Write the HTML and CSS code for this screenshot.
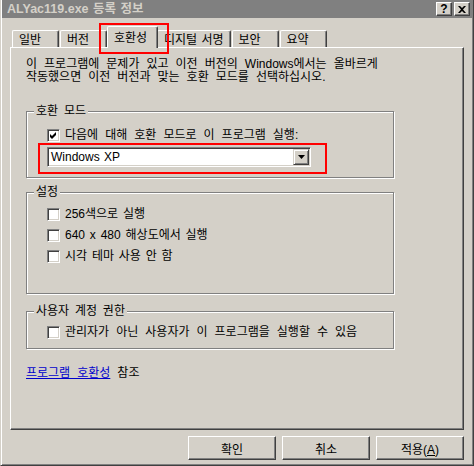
FILE: index.html
```html
<!DOCTYPE html>
<html lang="ko">
  <head>
    <meta charset="UTF-8" />
    <title>ALYac119.exe 등록 정보</title>
    <link rel="stylesheet" href="styles.css">
  </head>

  <body>
    <div class="window">
      <div class="titlebar">
        <span class="title">ALYac119.exe 등록 정보</span>
        <div class="caption-buttons">
          <span class="cap-btn cap-help">?</span>
          <span class="cap-btn">
            <svg width="8" height="7" viewBox="0 0 8 7"><path d="M0 0h2l2 2 2-2h2L5 3.5 8 7H6L4 5 2 7H0l3-3.5z" fill="#000"/></svg>
          </span>
        </div>
      </div>

      <div class="content">
        <div class="tabs">
          <div class="tab">일반</div>
          <div class="tab">버전</div>
          <div class="tab active">호환성</div>
          <div class="tab">디지털 서명</div>
          <div class="tab">보안</div>
          <div class="tab">요약</div>
        </div>

        <div class="panel">
          <p class="intro">이 프로그램에 문제가 있고 이전 버전의 Windows에서는 올바르게<br>작동했으면 이전 버전과 맞는 호환 모드를 선택하십시오.</p>

          <div class="group group-mode">
            <span class="group-title">호환 모드</span>
            <label class="option">
              <span class="check">
                <svg width="9" height="9" viewBox="0 0 9 9"><polygon points="1,3 3,5 7,1 7,4 3,8 1,6" fill="#000"/></svg>
              </span>
              다음에 대해 호환 모드로 이 프로그램 실행:
            </label>
            <div class="combo">
              <span class="combo-value">Windows XP</span>
              <span class="combo-arrow">
                <svg width="7" height="4" viewBox="0 0 7 4"><path d="M0 0h7L3.5 4z" fill="#000"/></svg>
              </span>
            </div>
          </div>

          <div class="group group-settings">
            <span class="group-title">설정</span>
            <label class="option"><span class="check"></span>256색으로 실행</label>
            <label class="option"><span class="check"></span>640 x 480 해상도에서 실행</label>
            <label class="option"><span class="check"></span>시각 테마 사용 안 함</label>
          </div>

          <div class="group group-rights">
            <span class="group-title">사용자 계정 권한</span>
            <label class="option"><span class="check"></span>관리자가 아닌 사용자가 이 프로그램을 실행할 수 있음</label>
          </div>

          <p class="see-also"><a href="#">프로그램 호환성</a> 참조</p>
        </div>

        <div class="buttons">
          <button>확인</button>
          <button>취소</button>
          <button>적용(<u>A</u>)</button>
        </div>
      </div>

      <div class="mark mark-tab"></div>
      <div class="mark mark-combo"></div>
    </div>
  </body>
</html>
```

FILE: styles.css
```css
body {
  margin: 0;
  padding: 0;
  background-color: #d4d0c8;
  font-family: "Liberation Sans", "Noto Sans CJK KR", sans-serif;
  font-size: 12px;
  word-spacing: 3.7px;
  color: #000;
}

.window {
  position: relative;
  width: 474px;
  height: 466px;
  box-sizing: border-box;
  border-left: 1px solid #d4d0c8;
  border-right: 1px solid #404040;
  border-bottom: 1px solid #404040;
  box-shadow: inset 1px 0 #fff, inset -1px -1px #808080;
  padding: 0 1px 1px 1px;
  overflow: hidden;
}

/* title bar */

.titlebar {
  display: flex;
  justify-content: space-between;
  align-items: center;
  height: 18px;
  padding: 0 2px 0 5px;
  background-color: #808080;
}

.title {
  color: #d4d0c8;
  font-weight: bold;
  font-size: 12.5px;
  line-height: 18px;
  word-spacing: 1px;
}

.caption-buttons {
  display: flex;
  gap: 2px;
}

.cap-btn {
  display: flex;
  justify-content: center;
  align-items: center;
  width: 16px;
  height: 14px;
  box-sizing: border-box;
  background-color: #d4d0c8;
  border: 1px solid;
  border-color: #fff #404040 #404040 #fff;
  box-shadow: inset -1px -1px #808080;
}

.cap-help {
  font-weight: bold;
  font-size: 12px;
  line-height: 12px;
}

/* tabs */

.content {
  padding: 0 8px;
}

.tabs {
  display: flex;
  align-items: flex-end;
  height: 21px;
  margin-top: 8px;
  padding-left: 2px;
}

.tab {
  position: relative;
  height: 17px;
  min-width: 47px;
  box-sizing: border-box;
  margin-right: 1px;
  padding: 2px 6px 0;
  line-height: 14px;
  word-spacing: 1px;
  border: 1px solid;
  border-color: #fff #404040 transparent #fff;
  border-bottom: none;
  border-radius: 2px 2px 0 0;
  box-shadow: inset -1px 0 #808080;
  white-space: nowrap;
}

.tab.active {
  z-index: 1;
  min-width: 51px;
  height: 22px;
  margin: 0 -1px -1px -1px;
  padding-top: 4px;
  background-color: #d4d0c8;
}

/* panel */

.panel {
  height: 383px;
  box-sizing: border-box;
  padding: 10px 15px 0;
  border: 1px solid;
  border-color: #fff #404040 #404040 #fff;
  box-shadow: inset -1px -1px #808080;
}

.intro {
  margin: 0;
  line-height: 13px;
}

.group {
  width: 368px;
  box-sizing: border-box;
  padding-left: 20px;
  border: 1px solid #808080;
  box-shadow: inset 1px 1px #fff, 1px 1px #fff;
}

.group-title {
  display: block;
  width: max-content;
  margin: -7px 0 0 -13px;
  padding: 0 2px;
  line-height: 13px;
  word-spacing: 2.5px;
  background-color: #d4d0c8;
}

.group-mode {
  margin-top: 27px;
  padding-bottom: 10px;
}

.group-settings {
  margin-top: 14px;
  padding-bottom: 30px;
}

.group-rights {
  margin-top: 17px;
  padding-bottom: 9px;
}

.option {
  display: flex;
  align-items: center;
  gap: 5px;
  height: 13px;
  line-height: 13px;
  margin-top: 8px;
  white-space: nowrap;
}

.group-mode .option {
  margin-top: 11px;
}

.group-settings .option {
  word-spacing: 1.5px;
}

.group-settings .option:first-of-type {
  margin-top: 9px;
}

.check {
  display: flex;
  justify-content: center;
  align-items: center;
  flex: none;
  width: 13px;
  height: 13px;
  box-sizing: border-box;
  background-color: #fff;
  border: 1px solid;
  border-color: #808080 #fff #fff #808080;
  box-shadow: inset 1px 1px #404040, inset -1px -1px #d4d0c8;
}

.combo {
  display: flex;
  justify-content: space-between;
  align-items: center;
  width: 264px;
  height: 20px;
  box-sizing: border-box;
  margin-top: 5px;
  padding: 1px;
  background-color: #fff;
  border: 1px solid;
  border-color: #808080 #fff #fff #808080;
  box-shadow: inset 1px 1px #404040, inset -1px -1px #d4d0c8;
}

.combo-value {
  padding-left: 2px;
  line-height: 16px;
  word-spacing: 1px;
}

.combo-arrow {
  display: flex;
  justify-content: center;
  align-items: center;
  width: 16px;
  height: 16px;
  box-sizing: border-box;
  background-color: #d4d0c8;
  border: 1px solid;
  border-color: #d4d0c8 #404040 #404040 #d4d0c8;
  box-shadow: inset 1px 1px #fff, inset -1px -1px #808080;
}

.see-also {
  margin: 18px 0 0;
  line-height: 13px;
}

.see-also a {
  color: #0000cc;
}

/* dialog buttons */

.buttons {
  display: flex;
  justify-content: flex-end;
  gap: 6px;
  margin-top: 6px;
}

button {
  width: 88px;
  height: 24px;
  padding: 0;
  font-family: inherit;
  font-size: 12px;
  color: #000;
  background-color: #d4d0c8;
  border: 1px solid;
  border-color: #fff #404040 #404040 #fff;
  box-shadow: inset -1px -1px #808080;
}

/* red annotation boxes */

.mark {
  position: absolute;
  box-sizing: border-box;
  border: 2px solid #ff0000;
}

.mark-tab {
  left: 98px;
  top: 23px;
  width: 70px;
  height: 31px;
}

.mark-combo {
  left: 37px;
  top: 143px;
  width: 289px;
  height: 31px;
}
```
